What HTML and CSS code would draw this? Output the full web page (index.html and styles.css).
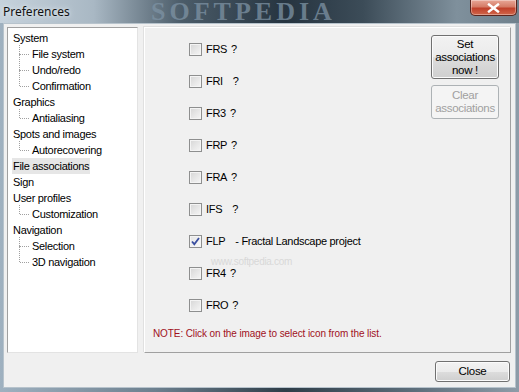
FILE: index.html
```html
<!DOCTYPE html>
<html>
  <head>
    <title>Preferences</title>
    <link rel="stylesheet" href="styles.css">
  </head>
  <body>
    <div class="window">
      <div class="titlebar">
        <span class="title">Preferences</span>
        <span class="watermark">SOFTPEDIA</span>
        <button class="close-x" aria-label="Close">
          <svg width="13" height="10" viewBox="0 0 13 10">
            <path d="M2 1.5 L11 8.5 M11 1.5 L2 8.5" stroke="#fff" stroke-width="2.4" stroke-linecap="square"/>
          </svg>
        </button>
      </div>

      <div class="client">
        <div class="main">
          <!-- category tree -->
          <ul class="tree">
            <li class="node">System
              <ul class="children">
                <li>File system</li>
                <li>Undo/redo</li>
                <li>Confirmation</li>
              </ul>
            </li>
            <li class="node">Graphics
              <ul class="children">
                <li>Antialiasing</li>
              </ul>
            </li>
            <li class="node">Spots and images
              <ul class="children">
                <li>Autorecovering</li>
              </ul>
            </li>
            <li class="node"><span class="selected">File associations</span></li>
            <li class="node">Sign</li>
            <li class="node">User profiles
              <ul class="children">
                <li>Customization</li>
              </ul>
            </li>
            <li class="node">Navigation
              <ul class="children">
                <li>Selection</li>
                <li>3D navigation</li>
              </ul>
            </li>
          </ul>

          <!-- associations panel -->
          <div class="panel">
            <div class="panel-body">
              <div class="assoc-list">
                <label class="assoc"><span class="check"></span><span class="ext">FRS</span><span class="q">?</span></label>
                <label class="assoc"><span class="check"></span><span class="ext">FRI</span><span class="q wide">?</span></label>
                <label class="assoc"><span class="check"></span><span class="ext">FR3</span><span class="q">?</span></label>
                <label class="assoc"><span class="check"></span><span class="ext">FRP</span><span class="q">?</span></label>
                <label class="assoc"><span class="check"></span><span class="ext">FRA</span><span class="q">?</span></label>
                <label class="assoc"><span class="check"></span><span class="ext">IFS</span><span class="q wide">?</span></label>
                <label class="assoc">
                  <span class="check checked">
                    <svg width="11" height="11" viewBox="0 0 11 11">
                      <path d="M2 5.5 L4.3 8.2 L9 2" fill="none" stroke="#3a4fa0" stroke-width="1.8"/>
                    </svg>
                  </span>
                  <span class="ext">FLP</span><span class="desc">- Fractal Landscape project</span>
                </label>
                <label class="assoc"><span class="check"></span><span class="ext">FR4</span><span class="q">?</span></label>
                <label class="assoc"><span class="check"></span><span class="ext">FRO</span><span class="q">?</span></label>
              </div>
              <div class="actions">
                <button class="btn btn-set">Set<br>associations<br>now !</button>
                <button class="btn btn-clear" disabled>Clear<br>associations</button>
              </div>
            </div>
            <p class="note">NOTE: Click on the image to select icon from the list.</p>
            <span class="site-mark">www.softpedia.com</span>
          </div>
        </div>

        <div class="footer">
          <button class="btn btn-close">Close</button>
        </div>
      </div>
    </div>
  </body>
</html>
```

FILE: styles.css
```css
body {
  margin: 0;
  font-family: "Liberation Sans", Arial, sans-serif;
  font-size: 11px;
  letter-spacing: -0.3px;
  color: #000;
  background: #4a5864;
}
.window {
  width: 519px;
  height: 392px;
  display: flex;
  flex-direction: column;
  background: linear-gradient(90deg, #9fb1c0 0%, #6c7f8e 30%, #2e3d48 55%, #5d6e7b 80%, #8e9ca8 100%);
  overflow: hidden;
}
.titlebar {
  position: relative;
  height: 23px;
  flex: none;
  background: linear-gradient(90deg, #c6d2dc 0%, #a9b8c4 18%, #4b5c69 35%, #263440 55%, #3c4c58 70%, #7f909c 88%, #6f808c 100%);
}
.title {
  position: absolute;
  left: 3px;
  top: 3px;
  font-family: "Noto Sans", "DejaVu Sans", sans-serif;
  font-size: 12px;
  letter-spacing: 0;
  color: #111;
  text-shadow: 0 0 6px #dfe8ee, 0 0 3px #dfe8ee;
}
.watermark {
  position: absolute;
  left: 151px;
  top: 0;
  font-family: "Liberation Serif", serif;
  font-weight: bold;
  font-size: 26px;
  line-height: 23px;
  letter-spacing: 4px;
  color: #7d92a3;
  opacity: 0.75;
}
.close-x {
  position: absolute;
  right: 2px;
  top: 0;
  width: 47px;
  height: 16px;
  padding: 0;
  border: 1px solid #5a241c;
  border-top: none;
  border-radius: 0 0 5px 5px;
  background: linear-gradient(#e8a797 0%, #d57b66 45%, #c0402a 55%, #d0664a 100%);
  box-shadow: inset 0 0 0 1px rgba(255, 255, 255, 0.35);
  display: flex;
  align-items: center;
  justify-content: center;
}
.client {
  flex: 1;
  margin: 0 3px 4px 3px;
  background: #f0f0f0;
  border: 1px solid #b7c3cc;
  padding: 3px 4px 0 3px;
  display: flex;
  flex-direction: column;
}
.main {
  display: flex;
  gap: 6px;
  height: 326px;
}

/* tree */
.tree {
  list-style: none;
  margin: 0;
  padding: 2px 0 0 5px;
  width: 124px;
  background: #fff;
  border: 1px solid #a0a0a0;
  border-right-color: #e3e3e3;
  border-bottom-color: #e3e3e3;
}
.tree li {
  line-height: 16px;
}
.children {
  list-style: none;
  margin: 0;
  padding: 0 0 0 19px;
}
.children li {
  position: relative;
}
.children li::before {
  content: "";
  position: absolute;
  left: -13px;
  top: -8px;
  height: 16px;
  border-left: 1px dotted #a0a0a0;
}
.children li:first-child::before {
  top: -1px;
  height: 9px;
}
.children li::after {
  content: "";
  position: absolute;
  left: -12px;
  top: 8px;
  width: 9px;
  border-top: 1px dotted #a0a0a0;
}
.selected {
  display: inline-block;
  background: #e6e6e6;
  padding: 0 1px;
  margin-left: -1px;
}

/* panel */
.panel {
  position: relative;
  flex: 1;
  border: 1px solid #a0a0a0;
  border-top-color: #fff;
  border-left-color: #fff;
  box-shadow: -1px -1px 0 #e0e0e0;
  display: flex;
  flex-direction: column;
}
.panel-body {
  display: flex;
  padding: 5px 11px 0 44px;
}
.assoc-list {
  flex: 1;
  display: flex;
  flex-direction: column;
}
.assoc {
  height: 32px;
  display: flex;
  align-items: center;
  font-size: 11px;
}
.ext {
  margin-left: 4px;
}
.q {
  margin-left: 4px;
}
.q.wide {
  margin-left: 10px;
}
.desc {
  margin-left: 10px;
}
.check {
  width: 11px;
  height: 11px;
  border: 1px solid #8e8f8f;
  background: linear-gradient(135deg, #d6d6d6, #f6f6f6);
  box-shadow: inset 0 0 0 1px #f4f4f4;
  display: flex;
  align-items: center;
  justify-content: center;
}
.check.checked {
  background: linear-gradient(135deg, #e4e4e4, #fafafa);
}
.actions {
  display: flex;
  flex-direction: column;
  gap: 6px;
  padding-top: 2px;
}
.btn {
  font-family: "Liberation Sans", Arial, sans-serif;
  font-size: 11.5px;
  letter-spacing: -0.3px;
  line-height: 13px;
  border-radius: 3px;
  padding: 1px 0;
}
.btn-set {
  width: 68px;
  height: 44px;
  color: #000;
  border: 1px solid #707070;
  background: linear-gradient(#f2f2f2 0%, #ebebeb 50%, #dddddd 51%, #cfcfcf 100%);
  box-shadow: inset 0 0 0 1px #fbfbfb;
}
.btn-clear {
  width: 68px;
  height: 34px;
  color: #a0a0a0;
  border: 1px solid #adb2b5;
  background: #f4f4f4;
}
.note {
  margin: 7px 0 0 8px;
  color: #a0101c;
  font-size: 10px;
  letter-spacing: -0.1px;
}
.site-mark {
  position: absolute;
  left: 66px;
  top: 228px;
  font-size: 10px;
  line-height: 11px;
  color: #d8d8d8;
}

/* footer */
.footer {
  display: flex;
  justify-content: flex-end;
  padding: 8px 1px 0 0;
}
.btn-close {
  width: 75px;
  height: 21px;
  border: 1px solid #707070;
  background: linear-gradient(#f2f2f2 0%, #ebebeb 50%, #dddddd 51%, #cfcfcf 100%);
  box-shadow: inset 0 0 0 1px #fbfbfb;
  color: #000;
}
```
